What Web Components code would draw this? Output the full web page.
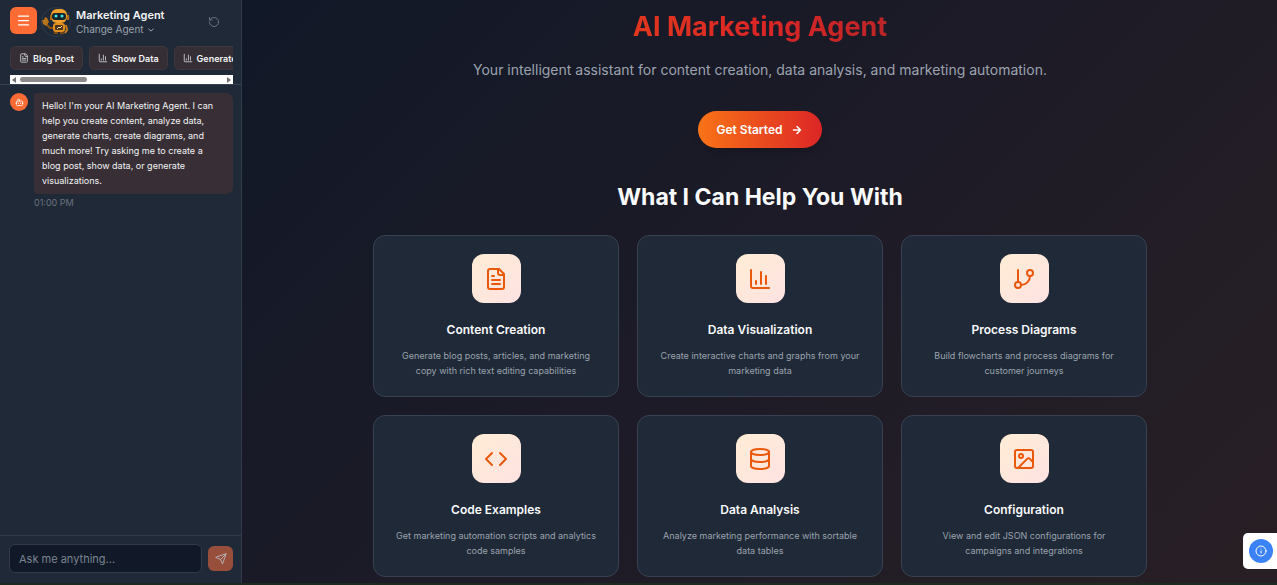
<!DOCTYPE html>
<html lang="en">
<head>
<meta charset="utf-8">
<meta name="viewport" content="width=device-width, initial-scale=1">
<title>AI Marketing Agent</title>
<style>
  body { margin: 0; font-family: Inter, "Liberation Sans", sans-serif; background: #111827; color: #f3f4f6; }
</style>
</head>
<body>
<agent-app>
  <agent-sidebar slot="sidebar">
    <span slot="name">Marketing Agent</span>
    <span slot="switch">Change Agent</span>
    <quick-action slot="actions" icon="file">Blog Post</quick-action>
    <quick-action slot="actions" icon="chart">Show Data</quick-action>
    <quick-action slot="actions" icon="chart">Generate Chart</quick-action>
    <chat-message slot="messages" time="01:00 PM">Hello! I'm your AI Marketing Agent. I can help you create content, analyze data, generate charts, create diagrams, and much more! Try asking me to create a blog post, show data, or generate visualizations.</chat-message>
  </agent-sidebar>
  <agent-hero>
    <span slot="title">AI Marketing Agent</span>
    <span slot="lead">Your intelligent assistant for content creation, data analysis, and marketing automation.</span>
    <span slot="action">Get Started</span>
  </agent-hero>
  <feature-grid>
    <span slot="heading">What I Can Help You With</span>
    <feature-card icon="file"><span slot="title">Content Creation</span>Generate blog posts, articles, and marketing copy with rich text editing capabilities</feature-card>
    <feature-card icon="chart"><span slot="title">Data Visualization</span>Create interactive charts and graphs from your marketing data</feature-card>
    <feature-card icon="branch"><span slot="title">Process Diagrams</span>Build flowcharts and process diagrams for customer journeys</feature-card>
    <feature-card icon="code"><span slot="title">Code Examples</span>Get marketing automation scripts and analytics code samples</feature-card>
    <feature-card icon="database"><span slot="title">Data Analysis</span>Analyze marketing performance with sortable data tables</feature-card>
    <feature-card icon="image"><span slot="title">Configuration</span>View and edit JSON configurations for campaigns and integrations</feature-card>
  </feature-grid>
  <info-badge slot="overlay"></info-badge>
</agent-app>

<script>
const ICONS = {
  menu: '<path d="M4 5h16M4 12h16M4 19h16"/>',
  file: '<path d="M15 2H6a2 2 0 0 0-2 2v16a2 2 0 0 0 2 2h12a2 2 0 0 0 2-2V7Z"/><path d="M14 2v4a2 2 0 0 0 2 2h4M10 9H8M16 13H8M16 17H8"/>',
  chart: '<path d="M3 3v16a2 2 0 0 0 2 2h16M18 17V9M13 17V5M8 17v-3"/>',
  branch: '<path d="M6 3v12"/><circle cx="18" cy="6" r="3"/><circle cx="6" cy="18" r="3"/><path d="M18 9a9 9 0 0 1-9 9"/>',
  code: '<path d="m16 18 6-6-6-6M8 6l-6 6 6 6"/>',
  database: '<ellipse cx="12" cy="5" rx="9" ry="3"/><path d="M3 5v14a9 3 0 0 0 18 0V5"/><path d="M3 12a9 3 0 0 0 18 0"/>',
  image: '<rect x="3" y="3" width="18" height="18" rx="2"/><circle cx="9" cy="9" r="2"/><path d="m21 15-3.1-3.1a2 2 0 0 0-2.8 0L6 21"/>',
  arrow: '<path stroke-width="3" d="M5 12h14M12 5l7 7-7 7"/>',
  chevron: '<path stroke-width="3" d="m5 9 7 6 7-6"/>',
  reset: '<path d="M3 12a9 9 0 1 0 9-9 9.75 9.75 0 0 0-6.74 2.74L3 8"/><path d="M3 3v5h5"/>',
  send: '<path d="m22 2-7 20-4-9-9-4Z"/><path d="M22 2 11 13"/>',
  bot: '<path d="M12 8V4H8"/><rect x="4" y="8" width="16" height="12" rx="2"/><path d="M2 14h2M20 14h2M15 13v2M9 13v2"/>',
  info: '<circle cx="12" cy="12" r="10"/><path d="M12 16v-4M12 8h.01"/>'
};

function define(name, html, setup, observed = []) {
  customElements.define(name, class extends HTMLElement {
    static observedAttributes = observed;
    constructor() {
      super();
      const template = document.createElement('template');
      template.innerHTML = '<style>*{box-sizing:border-box}button{font:inherit;color:inherit;border:0;padding:0;cursor:pointer}</style>' + html;
      this.attachShadow({ mode: 'open' }).append(template.content.cloneNode(true));
    }
    connectedCallback() { if (setup) setup(this, this.shadowRoot); }
    attributeChangedCallback() { if (setup) setup(this, this.shadowRoot); }
  });
}

define('ui-icon', `
  <style>
    :host { display: block; width: var(--size, 24px); height: var(--size, 24px); flex: none; }
    svg { display: block; width: 100%; height: 100%; fill: none; stroke: currentColor; stroke-width: 2; stroke-linecap: round; stroke-linejoin: round; }
  </style>
  <svg viewBox="0 0 24 24" aria-hidden="true"></svg>`,
  (el, root) => { root.querySelector('svg').innerHTML = ICONS[el.getAttribute('name')] || ''; },
  ['name']);

define('robot-avatar', `
  <style>
    :host { display: block; width: 30px; height: 30px; flex: none; border-radius: 50%; border: 1px solid #303b49; box-sizing: border-box; }
    svg { display: block; width: 28px; height: 28px; overflow: visible; }
  </style>
  <svg viewBox="0 0 28 28" aria-hidden="true">
    <path d="M5 14v3l3 3h4" fill="none" stroke="#8a5410" stroke-width="2"/>
    <path d="M0 12l2 0 1-3 2 1 2 4-3 4-3-2z" fill="#b9741a"/>
    <path d="M12 23h4v3h-4zM18 23h3l1 3h-4z" fill="#7a4c14"/>
    <rect x="11" y="15" width="12" height="9" rx="3" fill="#e08f1f"/>
    <rect x="13" y="17" width="8" height="5" rx="1" fill="#4a3520"/>
    <path d="M15 21l2-2 1 1 2-2" fill="none" stroke="#f7d9a1"/>
    <rect x="9" y="1" width="16" height="14" rx="6" fill="#f0a02a"/>
    <path d="M9 7v5M26 7v5" stroke="#b56d12" stroke-width="2"/>
    <rect x="10" y="5" width="14" height="7" rx="3" fill="#14252f"/>
    <circle cx="14" cy="8" r="1.500" fill="#42e8df"/><circle cx="20" cy="8" r="1.500" fill="#42e8df"/>
    <path d="M24 17l1 5-2 3" fill="none" stroke="#c77f1c" stroke-width="2"/>
  </svg>`);

define('quick-action', `
  <style>
    :host { display: block; flex: none; }
    button { display: flex; align-items: center; gap: 4px; height: 24px; padding: 0 8px; border: 1px solid #40373d; border-radius: 5px; background: #352e35; color: #f3f4f6; font-size: 9px; font-weight: 600; white-space: nowrap; }
    ui-icon { --size: 10px; color: #d1d5db; }
  </style>
  <button type="button"><ui-icon></ui-icon><slot></slot></button>`,
  (el, root) => root.querySelector('ui-icon').setAttribute('name', el.getAttribute('icon')));

define('scroll-track', `
  <style>
    :host { display: flex; align-items: center; justify-content: space-between; height: 9px; padding: 0 2px; background: #fff; }
    i { border: 3px solid transparent; border-right: 4px solid #737373; border-left: 0; }
    i:last-child { border-right: 0; border-left: 4px solid #737373; }
    span { flex: 1; margin: 0 4px; }
    b { display: block; width: 33%; height: 5px; border-radius: 3px; background: #8b8b8b; }
  </style>
  <i></i><span><b></b></span><i></i>`);

define('chat-message', `
  <style>
    :host { display: grid; grid-template-columns: 18px 1fr; gap: 4px 6px; }
    .bot { display: grid; place-items: center; width: 18px; height: 18px; border-radius: 50%; background: #ff6b35; color: #fff; }
    ui-icon { --size: 9px; }
    p { margin: 0; padding: 5px 12px 6px 8px; border-radius: 3px 7px 7px 3px; background: #372f35; color: #f3f4f6; font-size: 9px; line-height: 15px; }
    time { grid-column: 2; color: #6b7280; font-size: 9px; line-height: 10px; }
  </style>
  <div class="bot"><ui-icon name="bot"></ui-icon></div>
  <p><slot></slot></p>
  <time></time>`,
  (el, root) => { root.querySelector('time').textContent = el.getAttribute('time'); });

define('agent-sidebar', `
  <style>
    :host { display: flex; flex-direction: column; background: #1f2937; border-right: 1px solid #303a49; box-sizing: border-box; min-width: 0; }
    header { padding: 7px 8px 0 10px; border-bottom: 1px solid #374151; }
    .top { display: flex; align-items: flex-start; }
    .menu { display: grid; place-items: center; width: 27px; height: 27px; border-radius: 6px; background: #ff6b35; color: #fff; --size: 15px; }
    robot-avatar { margin: 0 5px 0 4px; }
    .id { flex: 1; min-width: 0; }
    h2 { margin: 0; font-size: 11px; font-weight: 600; line-height: 16px; }
    .switch { display: flex; align-items: center; gap: 3px; background: none; color: #9ca3af; font-size: 10px; line-height: 13px; --size: 8px; }
    .reset { align-self: center; margin-right: 13px; background: none; color: #6b7280; --size: 12px; }
    nav { display: flex; gap: 6px; margin-top: 9px; margin-bottom: 5px; overflow: hidden; }
    main { flex: 1; padding: 8px 8px 8px 10px; }
    form { display: flex; align-items: center; gap: 6px; padding: 8px 8px 10px 9px; border-top: 1px solid #303b49; }
    input { flex: 1; min-width: 0; height: 29px; padding: 0 9px; border: 1px solid #303b49; border-radius: 6px; background: #111827; color: #f3f4f6; font: 11px Inter, sans-serif; }
    input::placeholder { color: #7b8492; opacity: 1; }
    .send { display: grid; place-items: center; width: 25px; height: 25px; border-radius: 6px; background: #974e3b; color: #b5b0b2; --size: 12px; }
  </style>
  <header>
    <div class="top">
      <button class="menu" type="button" aria-label="Menu"><ui-icon name="menu"></ui-icon></button>
      <robot-avatar></robot-avatar>
      <div class="id">
        <h2><slot name="name"></slot></h2>
        <button class="switch" type="button"><slot name="switch"></slot><ui-icon name="chevron"></ui-icon></button>
      </div>
      <button class="reset" type="button" aria-label="Reset chat"><ui-icon name="reset"></ui-icon></button>
    </div>
    <nav><slot name="actions"></slot></nav>
    <scroll-track></scroll-track>
  </header>
  <main><slot name="messages"></slot></main>
  <form onsubmit="return false">
    <input type="text" aria-label="Message" placeholder="Ask me anything...">
    <button class="send" type="submit" aria-label="Send"><ui-icon name="send"></ui-icon></button>
  </form>`);

define('agent-hero', `
  <style>
    :host { display: flex; flex-direction: column; align-items: center; width: 100%; max-width: 774px; text-align: center; }
    h1 { width: 100%; margin: 0 0 14px; font-size: 27px; font-weight: 700; line-height: 34px; color: transparent; background: linear-gradient(90deg, #ea580c, #dc2626 50%, #7a2228); background-clip: text; -webkit-background-clip: text; }
    p { margin: 0 0 29px; color: #9ca3af; font-size: 14px; line-height: 24px; }
    button { display: flex; align-items: center; gap: 8px; height: 37px; padding: 0 19px 0 18px; border-radius: 19px; background: linear-gradient(90deg, #f97316, #dc2626); color: #fff; font-size: 12px; font-weight: 600; box-shadow: 0 6px 10px -3px #0003; --size: 12px; }
  </style>
  <h1><slot name="title"></slot></h1>
  <p><slot name="lead"></slot></p>
  <button type="button"><slot name="action"></slot><ui-icon name="arrow"></ui-icon></button>`);

define('feature-grid', `
  <style>
    :host { display: block; width: 100%; max-width: 774px; }
    h2 { margin: 0 0 23px; color: #f9fafb; font-size: 23px; font-weight: 700; line-height: 30px; text-align: center; }
    section { display: grid; grid-template-columns: repeat(3, minmax(0, 1fr)); gap: 18px; }
  </style>
  <h2><slot name="heading"></slot></h2>
  <section><slot></slot></section>`);

define('feature-card', `
  <style>
    :host { display: flex; flex-direction: column; align-items: center; padding: 18px; border: 1px solid #374151; border-radius: 12px; background: #1f2937; text-align: center; }
    .tile { display: grid; place-items: center; width: 49px; height: 49px; margin-bottom: 17px; border-radius: 12px; background: linear-gradient(135deg, #ffedd5, #fee2e2); color: #ea580c; --size: 24px; }
    h3 { margin: 0 0 8px; color: #f9fafb; font-size: 12px; font-weight: 600; line-height: 20px; }
    p { margin: 0; color: #9ca3af; font-size: 9px; line-height: 15px; }
  </style>
  <div class="tile"><ui-icon></ui-icon></div>
  <h3><slot name="title"></slot></h3>
  <p><slot></slot></p>`,
  (el, root) => root.querySelector('ui-icon').setAttribute('name', el.getAttribute('icon')));

define('info-badge', `
  <style>
    :host { display: block; padding: 6px 4px 6px 6px; border-radius: 5px 0 0 5px; background: #fff; }
    button { display: grid; place-items: center; width: 24px; height: 24px; border-radius: 50%; background: #3b82f6; color: #fff; --size: 12px; }
  </style>
  <button type="button" aria-label="Information"><ui-icon name="info"></ui-icon></button>`);

define('agent-app', `
  <style>
    :host { display: grid; grid-template-columns: 242px minmax(0, 1fr); min-height: 100vh; box-sizing: border-box; border-bottom: 2px solid #1c2a20; }
    .page { display: flex; flex-direction: column; align-items: center; gap: 34px; padding: 10px 24px 5px 25px; background: linear-gradient(135deg, #111827, #1d1b27 50%, #281f24); }
    .overlay { position: fixed; right: 0; bottom: 16px; }
  </style>
  <slot name="sidebar"></slot>
  <div class="page"><slot></slot></div>
  <div class="overlay"><slot name="overlay"></slot></div>`);
</script>
</body>
</html>
